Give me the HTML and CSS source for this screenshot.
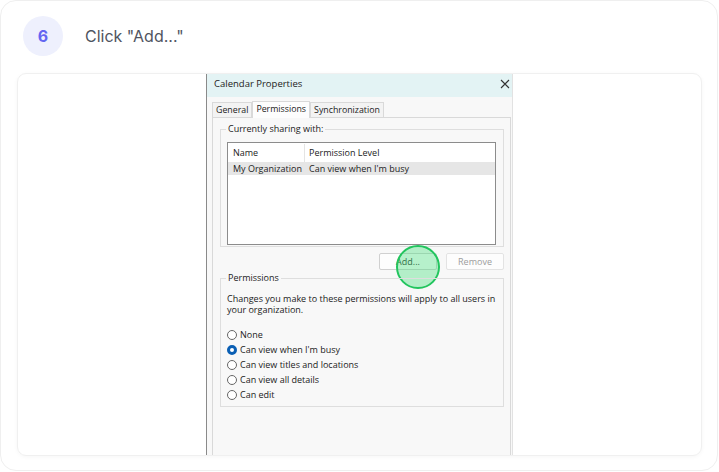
FILE: index.html
```html
<!DOCTYPE html>
<html lang="en">
<head>
    <meta charset="UTF-8">
    <meta name="viewport" content="width=device-width, initial-scale=1.0">
    <title>Step 6</title>
    <link rel="stylesheet" href="styles.css">
</head>
<body>
    <div class="card">
        <div class="step-head">
            <div class="badge">6</div>
            <div class="step-title">Click "Add..."</div>
        </div>

        <div class="shot">
            <div class="dlg">
                <div class="titlebar">
                    <span>Calendar Properties</span>
                    <svg class="close" width="10" height="10" viewBox="0 0 10 10">
                        <path d="M1 1L9 9M9 1L1 9" stroke="#333" stroke-width="1.1" fill="none"/>
                    </svg>
                </div>

                <div class="tabs">
                    <div class="tab">General</div>
                    <div class="tab active">Permissions</div>
                    <div class="tab">Synchronization</div>
                </div>

                <div class="panel">
                    <div class="group share">
                        <div class="legend">Currently sharing with:</div>
                        <div class="list">
                            <div class="row head">
                                <div class="col-name">Name</div>
                                <div class="col-level">Permission Level</div>
                            </div>
                            <div class="row sel">
                                <div class="col-name">My Organization</div>
                                <div class="col-level">Can view when I'm busy</div>
                            </div>
                        </div>
                    </div>

                    <div class="buttons">
                        <div class="btn">Add...
                            <span class="click"></span>
                        </div>
                        <div class="btn disabled">Remove</div>
                    </div>

                    <div class="group perms">
                        <div class="legend">Permissions</div>
                        <p class="note">Changes you make to these permissions will apply to all users in your organization.</p>
                        <div class="radios">
                            <div class="radio"><span class="dot"></span>None</div>
                            <div class="radio"><span class="dot on"></span>Can view when I'm busy</div>
                            <div class="radio"><span class="dot"></span>Can view titles and locations</div>
                            <div class="radio"><span class="dot"></span>Can view all details</div>
                            <div class="radio"><span class="dot"></span>Can edit</div>
                        </div>
                    </div>
                </div>
            </div>
        </div>
    </div>
</body>
</html>
```

FILE: styles.css
```css
html, body {
    margin: 0;
    padding: 0;
    background: #ffffff;
}
body {
    font-family: Inter, "Noto Sans", sans-serif;
    width: 719px;
    height: 472px;
    overflow: hidden;
}
.card {
    box-sizing: border-box;
    width: 718px;
    height: 471px;
    border: 1px solid #efefef;
    border-radius: 16px;
    padding: 15px 15px 0 16px;
    background: #fff;
}
.step-head {
    display: flex;
    align-items: center;
    gap: 22px;
    padding-left: 6px;
    height: 40px;
}
.badge {
    width: 40px;
    height: 40px;
    border-radius: 50%;
    background: #eef0fd;
    color: #6366f1;
    font-weight: 700;
    font-size: 16px;
    display: flex;
    align-items: center;
    justify-content: center;
}
.step-title {
    font-size: 16px;
    color: #50545f;
}
.shot {
    margin-top: 17px;
    height: 381px;
    border: 1px solid #f0f0f0;
    border-radius: 9px;
    box-shadow: 0 1px 4px rgba(0, 0, 0, 0.04);
    display: flex;
    justify-content: center;
    overflow: hidden;
}

/* the dialog screenshot */
.dlg {
    width: 305px;
    height: 385px;
    margin-top: -1px;
    background: #f8f8f8;
    border-left: 1px solid #8a8a8a;
    border-right: 1px solid #e2e2e2;
    font-family: "Open Sans", "Noto Sans", sans-serif;
    font-size: 9px;
    color: #222;
}
.titlebar {
    height: 24px;
    background: #e3f3f4;
    display: flex;
    align-items: center;
    justify-content: space-between;
    padding: 0 2px 4px 7px;
    box-sizing: border-box;
    font-size: 9.5px;
}
.close {
    margin-top: 2px;
}
.tabs {
    display: flex;
    margin: 4px 0 0 5px;
    height: 16px;
    align-items: flex-end;
}
.tab {
    padding: 0 3px;
    height: 14px;
    line-height: 14px;
    border: 1px solid #d9d9d9;
    border-bottom: none;
    background: #f3f3f3;
    font-size: 8.8px;
}
.tab.active {
    height: 16px;
    line-height: 14px;
    background: #fdfdfd;
    border-color: #d9d9d9;
    position: relative;
    z-index: 1;
    margin-bottom: -1px;
}
.panel {
    margin: 0 1px 0 5px;
    border: 1px solid #d9d9d9;
    height: 360px;
    background: #f8f8f8;
    padding: 7px 6px 0 7px;
}
.group {
    border: 1px solid #dedede;
    position: relative;
}
.legend {
    position: absolute;
    top: -7px;
    left: 5px;
    background: #f8f8f8;
    padding: 0 2px;
    line-height: 12px;
}
.share {
    height: 118px;
    margin-top: 4px;
    padding: 12px 7px 0 6px;
    box-sizing: border-box;
}
.list {
    height: 103px;
    box-sizing: border-box;
    border: 1px solid #8c8c8c;
    background: #fff;
    padding-top: 1px;
}
.row {
    display: flex;
    height: 13px;
    line-height: 13px;
}
.row.head {
    height: 18px;
    line-height: 18px;
}
.row.sel {
    background: #e6e6e6;
}
.col-name {
    width: 71px;
    padding-left: 5px;
}
.col-level {
    padding-left: 4px;
    border-left: 1px solid #e4e4e4;
}
.row.sel .col-level {
    border-left-color: transparent;
}
.buttons {
    display: flex;
    justify-content: flex-end;
    gap: 9px;
    margin: 6px 0 0 0;
}
.btn {
    width: 56px;
    height: 15px;
    line-height: 15px;
    text-align: center;
    border: 1px solid #d0d0d0;
    border-radius: 2px;
    background: #fdfdfd;
    position: relative;
}
.btn.disabled {
    color: #9c9c9c;
    border-color: #e3e3e3;
}
.click {
    position: absolute;
    left: 16px;
    top: -9px;
    width: 40px;
    height: 40px;
    border-radius: 50%;
    border: 2px solid #22c55e;
    background: rgba(74, 222, 128, 0.4);
}
.perms {
    margin-top: 8px;
    height: 129px;
    box-sizing: border-box;
    padding: 14px 6px 0 6px;
}
.note {
    margin: 0;
    line-height: 11px;
}
.radios {
    margin-top: 12px;
}
.radio {
    display: flex;
    align-items: center;
    height: 15px;
    gap: 3px;
}
.dot {
    width: 10px;
    height: 10px;
    border-radius: 50%;
    border: 1px solid #666;
    background: #fff;
    box-sizing: border-box;
}
.dot.on {
    border: 3px solid #0a5fb4;
    background: #fff;
}
```
